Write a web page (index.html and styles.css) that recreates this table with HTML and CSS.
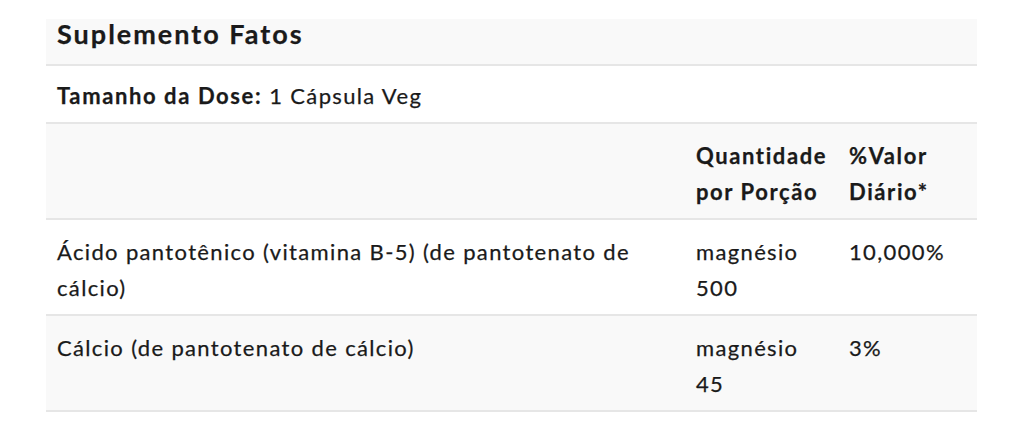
FILE: index.html
```html
<!DOCTYPE html>
<html lang="pt">
<head>
<meta charset="utf-8">
<link rel="stylesheet" href="styles.css">
</head>
<body>
<div class="page">
  <table class="facts">
    <colgroup>
      <col class="c1">
      <col class="c2">
      <col class="c3">
    </colgroup>
    <thead>
      <tr class="title-row"><th colspan="3" class="title">Suplemento Fatos</th></tr>
      <tr class="dose-row"><td colspan="3" class="dose"><strong>Tamanho da Dose:</strong> 1 Cápsula Veg</td></tr>
      <tr class="head-row">
        <th></th>
        <th>Quantidade por Porção</th>
        <th>%Valor Diário*</th>
      </tr>
    </thead>
    <tbody>
      <tr class="odd">
        <td>Ácido pantotênico (vitamina B-5) (de pantotenato de cálcio)</td>
        <td>magnésio 500</td>
        <td>10,000%</td>
      </tr>
      <tr class="even">
        <td>Cálcio (de pantotenato de cálcio)</td>
        <td>magnésio 45</td>
        <td>3%</td>
      </tr>
    </tbody>
  </table>
</div>
</body>
</html>
```
FILE: styles.css
```css
html, body {
  margin: 0;
  padding: 0;
  background: #ffffff;
}
body {
  font-family: Lato, "Open Sans", sans-serif;
  color: #1a1a1a;
}
.page {
  padding: 19px 47px 0 46px;
}
.facts {
  width: 931px;
  border-collapse: collapse;
  table-layout: fixed;
}
.c1 { width: 639px; }
.c2 { width: 153px; }
.c3 { width: 139px; }
.facts th, .facts td {
  text-align: left;
  vertical-align: top;
  padding: 14px 11px 8px;
  font-size: 22px;
  line-height: 36px;
  letter-spacing: 1.35px;
  -webkit-text-stroke: 0.25px #1a1a1a;
  border-bottom: 2px solid #e6e6e6;
}
.facts th, .facts strong {
  font-weight: 700;
  letter-spacing: 1.6px;
}
.title-row { background: #f9f9f9; }
.facts .title {
  font-size: 27px;
  line-height: 30px;
  letter-spacing: 2px;
  padding: 0 11px 15px;
}
.facts .dose { padding: 12px 11px 8px; }
.dose-row { background: #ffffff; }
.head-row { background: #f9f9f9; }
.odd { background: #ffffff; }
.even { background: #f9f9f9; }
```
